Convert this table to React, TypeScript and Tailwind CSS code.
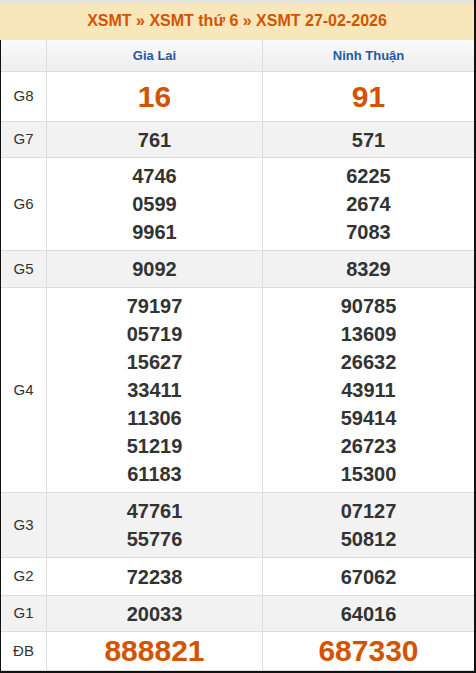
const gray = "bg-[#f2f2f2]";

type Row = { label: string; h: string; a: string[]; b: string[]; big?: boolean; bg?: boolean };

const rows: Row[] = [
  { label: "G8", h: "h-[50px]", a: ["16"], b: ["91"], big: true },
  { label: "G7", h: "h-[36px]", a: ["761"], b: ["571"], bg: true },
  { label: "G6", h: "h-[93px]", a: ["4746", "0599", "9961"], b: ["6225", "2674", "7083"] },
  { label: "G5", h: "h-[37px]", a: ["9092"], b: ["8329"], bg: true },
  {
    label: "G4",
    h: "h-[205px]",
    a: ["79197", "05719", "15627", "33411", "11306", "51219", "61183"],
    b: ["90785", "13609", "26632", "43911", "59414", "26723", "15300"],
  },
  { label: "G3", h: "h-[65px]", a: ["47761", "55776"], b: ["07127", "50812"], bg: true },
  { label: "G2", h: "h-[38px]", a: ["72238"], b: ["67062"] },
  { label: "G1", h: "h-[36px]", a: ["20033"], b: ["64016"], bg: true },
  { label: "ĐB", h: "h-[39px]", a: ["888821"], b: ["687330"], big: true },
];

const Nums = ({ list, big }: { list: string[]; big?: boolean }) => (
  <div className="flex flex-col items-center justify-center">
    {list.map((n) => (
      <span
        key={n}
        className={
          big
            ? "text-[30px] leading-[34px] font-bold text-[#d35400]"
            : "text-[20px] leading-[28px] font-bold text-[#333]"
        }
      >
        {n}
      </span>
    ))}
  </div>
);

const App = () => {
  return (
    <div className="w-[476px] h-[673px] bg-white font-['Liberation_Sans',Arial,sans-serif] border-r-2 border-b-2 border-[#111] flex flex-col">
      {/* Header */}
      <div className="border-t-[3px] border-[#d35400] bg-[#f7e7bb] h-[40px] flex items-center justify-center text-[16px] font-bold text-[#d35400] border-b border-[#e3e3e3]">
        XSMT » XSMT thứ 6 » XSMT 27-02-2026
      </div>

      <div className="border-l border-[#111] flex flex-col flex-1">
        {/* Provinces */}
        <div className="flex h-[32px] border-b border-[#ddd] bg-gradient-to-b from-[#fafafa] to-[#eeeeee] text-[13px] font-bold text-[#1c5aa6]">
          <div className="w-[46px] border-r border-[#ddd]" />
          <div className="w-[216px] border-r border-[#ddd] flex items-center justify-center">Gia Lai</div>
          <div className="flex-1 flex items-center justify-center">Ninh Thuận</div>
        </div>

        {rows.map((r) => (
          <div key={r.label} className={`flex border-b border-[#ddd] ${r.h} ${r.bg ? gray : "bg-white"}`}>
            <div className="w-[46px] border-r border-[#ddd] flex items-center justify-center text-[15px] text-[#333]">
              {r.label}
            </div>
            <div className="w-[216px] border-r border-[#ddd] flex items-center justify-center">
              <Nums list={r.a} big={r.big} />
            </div>
            <div className="flex-1 flex items-center justify-center">
              <Nums list={r.b} big={r.big} />
            </div>
          </div>
        ))}
      </div>
    </div>
  );
};

export default App;
